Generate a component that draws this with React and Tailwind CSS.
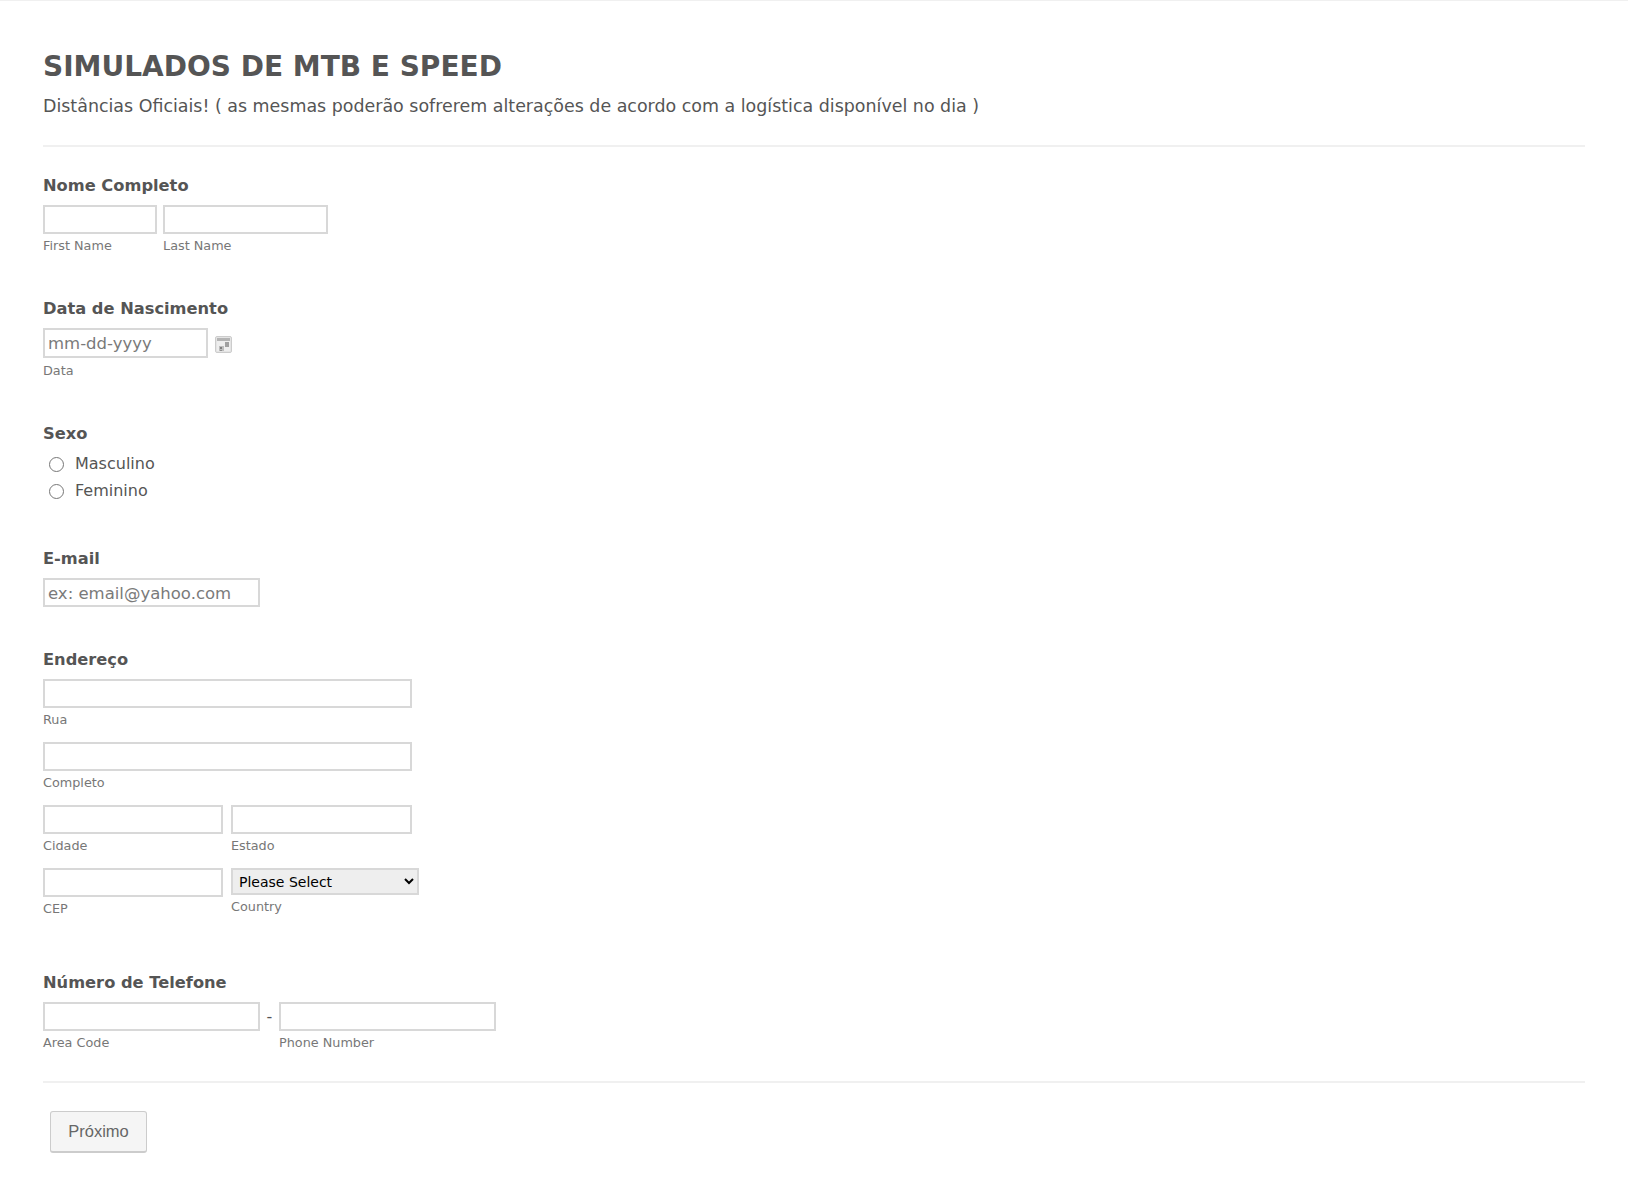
const inputCls = "block h-[29px] border-2 border-[#d8d8d8] bg-white px-[3px] text-[16.5px] text-[#555] placeholder:text-[#7a7a7a] outline-none";

function Sub({ children, className = "mt-[4px]" }) {
  return <div className={"h-[16px] text-[12.8px] leading-[16px] text-[#777] " + className}>{children}</div>;
}

function Label({ children }) {
  return <div className="h-[20px] text-[16.25px] font-bold leading-[22px] text-[#555]">{children}</div>;
}

function Field({ w, label, placeholder, tall, low }) {
  return (
    <div style={{ width: w }}>
      <input className={inputCls + " w-full" + (tall ? " !h-[30px]" : "") + (low ? " pt-[2px]" : "")} placeholder={placeholder} />
      {label && <Sub>{label}</Sub>}
    </div>
  );
}

function CalendarIcon() {
  return (
    <svg width="17" height="17" viewBox="0 0 17 17" className="ml-[7px] mt-[8px] shrink-0">
      <rect x="0.5" y="0.5" width="16" height="16" rx="1.5" fill="#e4e4e4" stroke="#cccccc" />
      <rect x="2" y="2" width="13" height="3" fill="#b4b4b4" />
      <rect x="2" y="5" width="13" height="10" fill="#eeeeee" />
      <rect x="10" y="6" width="4" height="5" fill="#a0a0a0" />
      <rect x="4" y="10" width="5" height="5" fill="#bdbdbd" />
      <rect x="5" y="11" width="2" height="2" fill="#7f7f7f" />
      <rect x="5" y="14" width="2" height="1" fill="#8f8f8f" />
    </svg>
  );
}

function Radio({ label }) {
  return (
    <label className="flex h-[27px] items-center text-[16px] text-[#555]">
      <input type="radio" name="sexo" className="ml-[6px] mr-[11px] mt-[2px] h-[15px] w-[15px]" />
      {label}
    </label>
  );
}

export default function App() {
  return (
    <div className="min-h-[1181px] bg-white font-['DejaVu_Sans',sans-serif]">
      <div className="h-px bg-[#f0f0f0]" />
      <div className="px-[43px]">
        <h1 className="mt-[47px] h-[36px] text-[28px] font-bold leading-[38px] text-[#555]">SIMULADOS DE MTB E SPEED</h1>
        <p className="mt-[9px] h-[24px] text-[17.45px] leading-[26px] text-[#555]">
          Distâncias Oficiais! ( as mesmas poderão sofrerem alterações de acordo com a logística disponível no dia )
        </p>
        <div className="mt-[28px] h-[2px] bg-[#f0f0f0]" />

        <section className="mt-[28px]">
          <Label>Nome Completo</Label>
          <div className="mt-[10px] flex gap-[6px]">
            <Field w={114} label="First Name" />
            <Field w={165} label="Last Name" />
          </div>
        </section>

        <section className="mt-[44px]">
          <Label>Data de Nascimento</Label>
          <div className="mt-[10px] flex">
            <Field w={165} placeholder="mm-dd-yyyy" tall />
            <CalendarIcon />
          </div>
          <Sub className="mt-[5px]">Data</Sub>
        </section>

        <section className="mt-[44px]">
          <Label>Sexo</Label>
          <div className="mt-[7px]">
            <Radio label="Masculino" />
            <Radio label="Feminino" />
          </div>
        </section>

        <section className="mt-[44px]">
          <Label>E-mail</Label>
          <div className="mt-[10px]">
            <Field w={217} placeholder="ex: email@yahoo.com" low />
          </div>
        </section>

        <section className="mt-[42px]">
          <Label>Endereço</Label>
          <div className="mt-[10px]">
            <Field w={369} label="Rua" />
          </div>
          <div className="mt-[14px]">
            <Field w={369} label="Completo" />
          </div>
          <div className="mt-[14px] flex gap-[8px]">
            <Field w={180} label="Cidade" />
            <Field w={181} label="Estado" />
          </div>
          <div className="mt-[14px] flex gap-[8px]">
            <Field w={180} label="CEP" />
            <div className="w-[188px]">
              <select className="block h-[27px] w-full border-2 border-[#d8d8d8] bg-[#eeeeee] px-[2px] text-[14px] text-black">
                <option>Please Select</option>
              </select>
              <Sub>Country</Sub>
            </div>
          </div>
        </section>

        <section className="mt-[55px]">
          <Label>Número de Telefone</Label>
          <div className="mt-[10px] flex">
            <Field w={217} label="Area Code" />
            <div className="flex w-[19px] justify-center pt-[3px] text-[16px] text-[#555]">-</div>
            <Field w={217} label="Phone Number" />
          </div>
        </section>

        <div className="mt-[30px] h-[2px] bg-[#f0f0f0]" />

        <div className="mt-[28px] pl-[7px]">
          <button className="h-[42px] w-[97px] rounded-[3px] border border-[#cccccc] border-b-2 bg-[#f5f5f5] font-['Liberation_Sans',sans-serif] text-[16.5px] text-[#666]">
            Próximo
          </button>
        </div>
      </div>
    </div>
  );
}
